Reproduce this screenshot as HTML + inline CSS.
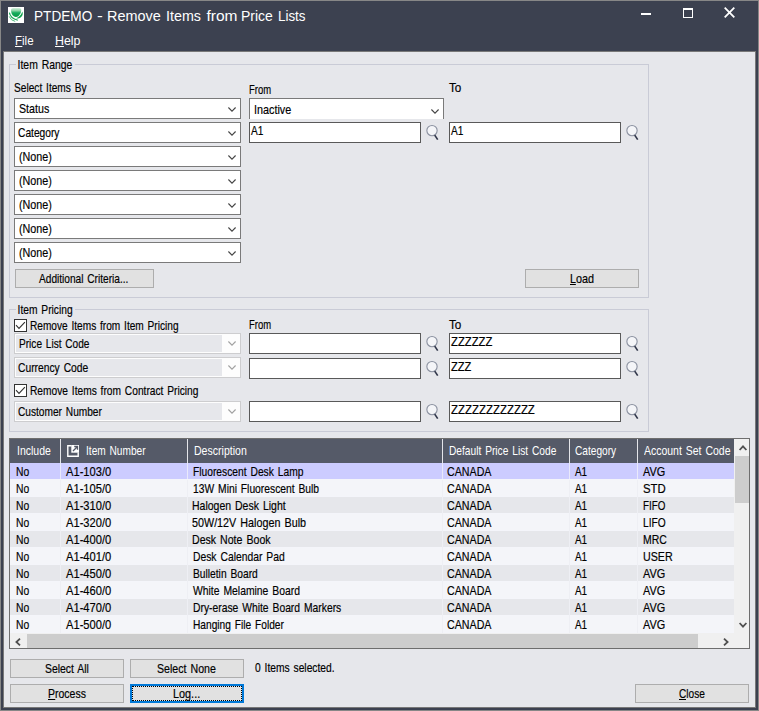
<!DOCTYPE html><html><head><meta charset="utf-8"><title>PTDEMO - Remove Items from Price Lists</title><style>
html,body{margin:0;padding:0}
body{width:759px;height:711px;position:relative;overflow:hidden;background:#3c4150;font-family:"Liberation Sans",sans-serif;font-size:13px;color:#000}
.a{position:absolute;box-sizing:border-box}
.t{position:absolute;white-space:pre;line-height:1;transform-origin:0 0;color:#000;word-spacing:1.3px;-webkit-text-stroke:0.18px}
.t u{text-decoration:none;background:linear-gradient(currentColor,currentColor) no-repeat;background-size:100% 1px}
.client{left:3px;top:51px;width:753px;height:657px;background:#e6e7eb;border:1px solid #787878}
.grp{border:1px solid #c9cbd6}
.cb{background:#fff;border:1px solid #7a7a7a}
.tb{background:#fff;border:1px solid #595959}
.btn{background:#e1e1e1;border:1px solid #adadad}
.dcb{background:#fdfdfd;border:1px solid #cdcdcf}
.dcb i{position:absolute;left:1px;top:1px;bottom:1px;width:206px;background:#e6e7eb}
svg{position:absolute;overflow:visible}
.row{left:10px;width:724px;height:17px;border-bottom:1px solid #f4f5fa}
</style></head><body>
<div class="a" style="left:0;top:0;width:759px;height:711px;border:1px solid #878787"></div>
<div class="a client"></div>
<svg class="a" style="left:8px;top:7px" width="16" height="16" viewBox="0 0 16 16">
<defs><linearGradient id="g1" x1="0" y1="0" x2="0" y2="1"><stop offset="0" stop-color="#d9f3e2"/><stop offset="0.3" stop-color="#8fd4a8"/><stop offset="0.55" stop-color="#16ad5c"/><stop offset="1" stop-color="#089a47"/></linearGradient></defs>
<rect width="16" height="16" fill="#fff"/>
<path d="M3 3 Q3 0.9 5.2 0.9 L11.3 0.9 Q13.3 0.9 13.3 3 Q13.3 6.8 10.6 9 Q8 10.6 5.8 9.3 Q3 7.3 3 3 Z" fill="url(#g1)"/>
<path d="M14.4 4.6 Q15.6 8.4 12.6 10.6 Q10.6 11.9 8.2 11.3 Q12.6 9.8 14.4 4.6 Z" fill="#0ea24d"/>
<path d="M1.4 5.6 Q2.2 11.2 9.8 13.3" fill="none" stroke="#19a855" stroke-width="1.1"/>
<path d="M1.2 9.4 Q2.8 13.6 7.2 14.4" fill="none" stroke="#3cb66f" stroke-width="0.9"/>
</svg>
<div class="a" style="left:641px;top:13px;width:10px;height:2px;background:#fff"></div>
<div class="a" style="left:683px;top:8px;width:10px;height:10px;border:1px solid #fff;border-top-width:2px"></div>
<svg class="a" style="left:724px;top:7px" width="11" height="11" viewBox="0 0 11 11"><path d="M0.7 0.7 L10.3 10.3 M10.3 0.7 L0.7 10.3" stroke="#fff" stroke-width="1.8" fill="none"/></svg>
<div class="a grp" style="left:9px;top:64px;width:640px;height:234px"></div>
<div class="a grp" style="left:9px;top:309px;width:640px;height:123px"></div>
<div class="a cb" style="left:14px;top:98px;width:227px;height:21px"></div>
<svg style="left:228px;top:107px" width="8" height="5" viewBox="0 0 8 5"><path d="M0.4 0.5 L4 4.1 L7.6 0.5" fill="none" stroke="#444" stroke-width="1.1"/></svg>
<div class="a cb" style="left:14px;top:122px;width:227px;height:21px"></div>
<svg style="left:228px;top:131px" width="8" height="5" viewBox="0 0 8 5"><path d="M0.4 0.5 L4 4.1 L7.6 0.5" fill="none" stroke="#444" stroke-width="1.1"/></svg>
<div class="a cb" style="left:14px;top:146px;width:227px;height:21px"></div>
<svg style="left:228px;top:155px" width="8" height="5" viewBox="0 0 8 5"><path d="M0.4 0.5 L4 4.1 L7.6 0.5" fill="none" stroke="#444" stroke-width="1.1"/></svg>
<div class="a cb" style="left:14px;top:170px;width:227px;height:21px"></div>
<svg style="left:228px;top:179px" width="8" height="5" viewBox="0 0 8 5"><path d="M0.4 0.5 L4 4.1 L7.6 0.5" fill="none" stroke="#444" stroke-width="1.1"/></svg>
<div class="a cb" style="left:14px;top:194px;width:227px;height:21px"></div>
<svg style="left:228px;top:203px" width="8" height="5" viewBox="0 0 8 5"><path d="M0.4 0.5 L4 4.1 L7.6 0.5" fill="none" stroke="#444" stroke-width="1.1"/></svg>
<div class="a cb" style="left:14px;top:218px;width:227px;height:21px"></div>
<svg style="left:228px;top:227px" width="8" height="5" viewBox="0 0 8 5"><path d="M0.4 0.5 L4 4.1 L7.6 0.5" fill="none" stroke="#444" stroke-width="1.1"/></svg>
<div class="a cb" style="left:14px;top:242px;width:227px;height:21px"></div>
<svg style="left:228px;top:251px" width="8" height="5" viewBox="0 0 8 5"><path d="M0.4 0.5 L4 4.1 L7.6 0.5" fill="none" stroke="#444" stroke-width="1.1"/></svg>
<div class="a cb" style="left:249px;top:98px;width:195px;height:22px;border-bottom:none;height:21px"></div>
<svg style="left:431px;top:108.5px" width="8" height="5" viewBox="0 0 8 5"><path d="M0.4 0.5 L4 4.1 L7.6 0.5" fill="none" stroke="#444" stroke-width="1.1"/></svg>
<div class="a tb" style="left:249px;top:122px;width:172px;height:21px"></div>
<div class="a tb" style="left:449px;top:122px;width:172px;height:21px"></div>
<svg style="left:426px;top:125px" width="14" height="16" viewBox="0 0 14 16"><circle cx="6" cy="5.6" r="5.15" fill="#f4f5f8" stroke="#8b91a0" stroke-width="1.1"/><path d="M8.7 10.1 L11.7 14.6" stroke="#30364a" stroke-width="1.7" fill="none"/></svg>
<svg style="left:626px;top:125px" width="14" height="16" viewBox="0 0 14 16"><circle cx="6" cy="5.6" r="5.15" fill="#f4f5f8" stroke="#8b91a0" stroke-width="1.1"/><path d="M8.7 10.1 L11.7 14.6" stroke="#30364a" stroke-width="1.7" fill="none"/></svg>
<div class="a tb" style="left:249px;top:333px;width:172px;height:21px"></div>
<div class="a tb" style="left:449px;top:333px;width:172px;height:21px"></div>
<svg style="left:426px;top:336px" width="14" height="16" viewBox="0 0 14 16"><circle cx="6" cy="5.6" r="5.15" fill="#f4f5f8" stroke="#8b91a0" stroke-width="1.1"/><path d="M8.7 10.1 L11.7 14.6" stroke="#30364a" stroke-width="1.7" fill="none"/></svg>
<svg style="left:626px;top:336px" width="14" height="16" viewBox="0 0 14 16"><circle cx="6" cy="5.6" r="5.15" fill="#f4f5f8" stroke="#8b91a0" stroke-width="1.1"/><path d="M8.7 10.1 L11.7 14.6" stroke="#30364a" stroke-width="1.7" fill="none"/></svg>
<div class="a tb" style="left:249px;top:358px;width:172px;height:21px"></div>
<div class="a tb" style="left:449px;top:358px;width:172px;height:21px"></div>
<svg style="left:426px;top:361px" width="14" height="16" viewBox="0 0 14 16"><circle cx="6" cy="5.6" r="5.15" fill="#f4f5f8" stroke="#8b91a0" stroke-width="1.1"/><path d="M8.7 10.1 L11.7 14.6" stroke="#30364a" stroke-width="1.7" fill="none"/></svg>
<svg style="left:626px;top:361px" width="14" height="16" viewBox="0 0 14 16"><circle cx="6" cy="5.6" r="5.15" fill="#f4f5f8" stroke="#8b91a0" stroke-width="1.1"/><path d="M8.7 10.1 L11.7 14.6" stroke="#30364a" stroke-width="1.7" fill="none"/></svg>
<div class="a tb" style="left:249px;top:401px;width:172px;height:21px"></div>
<div class="a tb" style="left:449px;top:401px;width:172px;height:21px"></div>
<svg style="left:426px;top:404px" width="14" height="16" viewBox="0 0 14 16"><circle cx="6" cy="5.6" r="5.15" fill="#f4f5f8" stroke="#8b91a0" stroke-width="1.1"/><path d="M8.7 10.1 L11.7 14.6" stroke="#30364a" stroke-width="1.7" fill="none"/></svg>
<svg style="left:626px;top:404px" width="14" height="16" viewBox="0 0 14 16"><circle cx="6" cy="5.6" r="5.15" fill="#f4f5f8" stroke="#8b91a0" stroke-width="1.1"/><path d="M8.7 10.1 L11.7 14.6" stroke="#30364a" stroke-width="1.7" fill="none"/></svg>
<div class="a btn" style="left:15px;top:269px;width:139px;height:19px;"></div>
<div class="a btn" style="left:525px;top:269px;width:114px;height:19px;"></div>
<div class="a btn" style="left:10px;top:659px;width:114px;height:19px;"></div>
<div class="a btn" style="left:130px;top:659px;width:114px;height:19px;"></div>
<div class="a btn" style="left:10px;top:684px;width:114px;height:19px;"></div>
<div class="a btn" style="left:635px;top:684px;width:114px;height:19px;"></div>
<div class="a" style="left:130px;top:684px;width:114px;height:19px;background:#e1e1e1;border:2px solid #0078d7"></div>
<div class="a" style="left:132px;top:686px;width:110px;height:15px;border:1px dotted #000"></div>
<svg style="left:14px;top:319px" width="13" height="13" viewBox="0 0 13 13"><rect x="0.5" y="0.5" width="12" height="12" fill="#fff" stroke="#333"/><path d="M2 6.2 L5 9.3 L10.9 3.2" fill="none" stroke="#333" stroke-width="1.15"/></svg>
<svg style="left:14px;top:384px" width="13" height="13" viewBox="0 0 13 13"><rect x="0.5" y="0.5" width="12" height="12" fill="#fff" stroke="#333"/><path d="M2 6.2 L5 9.3 L10.9 3.2" fill="none" stroke="#333" stroke-width="1.15"/></svg>
<div class="a dcb" style="left:14px;top:333px;width:227px;height:21px"><i></i></div>
<svg style="left:228px;top:340.8px" width="8" height="5" viewBox="0 0 8 5"><path d="M0.4 0.5 L4 4.1 L7.6 0.5" fill="none" stroke="#a0a0a0" stroke-width="1.1"/></svg>
<div class="a dcb" style="left:14px;top:357px;width:227px;height:21px"><i></i></div>
<svg style="left:228px;top:364.8px" width="8" height="5" viewBox="0 0 8 5"><path d="M0.4 0.5 L4 4.1 L7.6 0.5" fill="none" stroke="#a0a0a0" stroke-width="1.1"/></svg>
<div class="a dcb" style="left:14px;top:401px;width:227px;height:21px"><i></i></div>
<svg style="left:228px;top:408.8px" width="8" height="5" viewBox="0 0 8 5"><path d="M0.4 0.5 L4 4.1 L7.6 0.5" fill="none" stroke="#a0a0a0" stroke-width="1.1"/></svg>
<div class="a" style="left:9px;top:438px;width:741px;height:211px;background:#f0f0f0;border:1px solid #6e6e6e"></div>
<div class="a" style="left:10px;top:439px;width:724px;height:24px;background:#555a68"></div>
<div class="a row" style="top:463px;background:#ccccff"></div>
<div class="a row" style="top:480px;background:#f4f5f9"></div>
<div class="a row" style="top:497px;background:#e6e7eb"></div>
<div class="a row" style="top:514px;background:#f4f5f9"></div>
<div class="a row" style="top:531px;background:#e6e7eb"></div>
<div class="a row" style="top:548px;background:#f4f5f9"></div>
<div class="a row" style="top:565px;background:#e6e7eb"></div>
<div class="a row" style="top:582px;background:#f4f5f9"></div>
<div class="a row" style="top:599px;background:#e6e7eb"></div>
<div class="a row" style="top:616px;background:#f4f5f9"></div>
<div class="a" style="left:60px;top:463px;width:1px;height:16px;background:#e9e9fb"></div>
<div class="a" style="left:60px;top:439px;width:1px;height:24px;background:#e4e5ea"></div>
<div class="a" style="left:60px;top:480px;width:1px;height:153px;background:#eeeff4"></div>
<div class="a" style="left:187px;top:463px;width:1px;height:16px;background:#e9e9fb"></div>
<div class="a" style="left:187px;top:439px;width:1px;height:24px;background:#e4e5ea"></div>
<div class="a" style="left:187px;top:480px;width:1px;height:153px;background:#eeeff4"></div>
<div class="a" style="left:442px;top:463px;width:1px;height:16px;background:#e9e9fb"></div>
<div class="a" style="left:442px;top:439px;width:1px;height:24px;background:#e4e5ea"></div>
<div class="a" style="left:442px;top:480px;width:1px;height:153px;background:#eeeff4"></div>
<div class="a" style="left:569px;top:463px;width:1px;height:16px;background:#e9e9fb"></div>
<div class="a" style="left:569px;top:439px;width:1px;height:24px;background:#e4e5ea"></div>
<div class="a" style="left:569px;top:480px;width:1px;height:153px;background:#eeeff4"></div>
<div class="a" style="left:637px;top:463px;width:1px;height:16px;background:#e9e9fb"></div>
<div class="a" style="left:637px;top:439px;width:1px;height:24px;background:#e4e5ea"></div>
<div class="a" style="left:637px;top:480px;width:1px;height:153px;background:#eeeff4"></div>
<svg style="left:67px;top:445px" width="12" height="12" viewBox="0 0 12 12"><path d="M4.5 0.8 H0.8 V11.2 H11.2 V7.5" fill="none" stroke="#fff" stroke-width="1.4"/><rect x="4.3" y="0" width="7.7" height="7.7" fill="#fff"/><path d="M6 6 L10.3 1.7 M7.2 1.5 H10.5 V4.8" fill="none" stroke="#555a68" stroke-width="1.3"/></svg>
<div class="a" style="left:735px;top:456px;width:14px;height:47px;background:#cdcdcd"></div>
<svg style="left:739px;top:445px" width="8" height="6" viewBox="0 0 8 6"><path d="M0.6 5 L4 1.4 L7.4 5" fill="none" stroke="#505050" stroke-width="1.8"/></svg>
<svg style="left:739px;top:622px" width="8" height="6" viewBox="0 0 8 6"><path d="M0.6 1 L4 4.6 L7.4 1" fill="none" stroke="#505050" stroke-width="1.8"/></svg>
<div class="a" style="left:27px;top:634px;width:671px;height:14px;background:#cdcdcd"></div>
<svg style="left:15px;top:638px" width="6" height="8" viewBox="0 0 6 8"><path d="M5 0.6 L1.4 4 L5 7.4" fill="none" stroke="#505050" stroke-width="1.8"/></svg>
<svg style="left:723px;top:638px" width="6" height="8" viewBox="0 0 6 8"><path d="M1 0.6 L4.6 4 L1 7.4" fill="none" stroke="#505050" stroke-width="1.8"/></svg>
<span class="t" style="left:34.12px;top:8.00px;transform:scaleX(0.8785);font-size:15.5px;word-spacing:0;color:#fff;-webkit-text-stroke:0">PTDEMO</span>
<span class="t" style="left:96.97px;top:8.00px;transform:scaleX(1.1250);font-size:15.5px;word-spacing:0;color:#fff;-webkit-text-stroke:0">-</span>
<span class="t" style="left:106.67px;top:8.00px;transform:scaleX(0.9321);font-size:15.5px;word-spacing:0;color:#fff;-webkit-text-stroke:0">Remove</span>
<span class="t" style="left:165.58px;top:8.00px;transform:scaleX(0.9216);font-size:15.5px;word-spacing:0;color:#fff;-webkit-text-stroke:0">Items</span>
<span class="t" style="left:206.50px;top:8.00px;transform:scaleX(1.0000);font-size:15.5px;word-spacing:0;color:#fff;-webkit-text-stroke:0">from</span>
<span class="t" style="left:241.30px;top:8.00px;transform:scaleX(0.9000);font-size:15.5px;word-spacing:0;color:#fff;-webkit-text-stroke:0">Price</span>
<span class="t" style="left:278.24px;top:8.00px;transform:scaleX(0.8633);font-size:15.5px;word-spacing:0;color:#fff;-webkit-text-stroke:0">Lists</span>
<span class="t" style="left:14.58px;top:35.00px;transform:scaleX(0.9211);font-size:12.5px;word-spacing:0;color:#fff;-webkit-text-stroke:0"><u style="background-position:0 12px">F</u>ile</span>
<span class="t" style="left:55.01px;top:35.00px;transform:scaleX(0.9917);font-size:12.5px;word-spacing:0;color:#fff;-webkit-text-stroke:0"><u style="background-position:0 12px">H</u>elp</span>
<span class="t" style="left:17.70px;top:58.00px;transform:scaleX(0.7985);background:#e6e7eb;padding:0 3px 0 2px;margin-left:-1.60px">Item Range</span>
<span class="t" style="left:13.72px;top:81.00px;transform:scaleX(0.7815)">Select Items By</span>
<span class="t" style="left:249.17px;top:83.00px;transform:scaleX(0.7276)">From</span>
<span class="t" style="left:449.10px;top:81.00px;transform:scaleX(0.9000)">To</span>
<span class="t" style="left:18.88px;top:102.00px;transform:scaleX(0.8200)">Status</span>
<span class="t" style="left:254.07px;top:103.00px;transform:scaleX(0.8302)">Inactive</span>
<span class="t" style="left:18.31px;top:126.00px;transform:scaleX(0.7865)">Category</span>
<span class="t" style="left:18.67px;top:150.00px;transform:scaleX(0.8289)">(None)</span>
<span class="t" style="left:18.67px;top:174.00px;transform:scaleX(0.8289)">(None)</span>
<span class="t" style="left:18.67px;top:198.00px;transform:scaleX(0.8289)">(None)</span>
<span class="t" style="left:18.67px;top:222.00px;transform:scaleX(0.8289)">(None)</span>
<span class="t" style="left:18.67px;top:246.00px;transform:scaleX(0.8289)">(None)</span>
<span class="t" style="left:251.00px;top:124.00px;transform:scaleX(0.7750)">A1</span>
<span class="t" style="left:451.00px;top:124.00px;transform:scaleX(0.7750)">A1</span>
<span class="t" style="left:39.20px;top:272.00px;transform:scaleX(0.7789)">Additional Criteria...</span>
<span class="t" style="left:569.67px;top:272.00px;transform:scaleX(0.8333)"><u style="background-position:0 13px">L</u>oad</span>
<span class="t" style="left:17.71px;top:303.00px;transform:scaleX(0.7868);background:#e6e7eb;padding:0 3px 0 2px;margin-left:-1.57px">Item Pricing</span>
<span class="t" style="left:30.12px;top:319.00px;transform:scaleX(0.7783)">Remove Items from Item Pricing</span>
<span class="t" style="left:249.17px;top:318.00px;transform:scaleX(0.7276)">From</span>
<span class="t" style="left:449.10px;top:318.00px;transform:scaleX(0.9000)">To</span>
<span class="t" style="left:19.12px;top:337.00px;transform:scaleX(0.7764)">Price List Code</span>
<span class="t" style="left:18.31px;top:361.00px;transform:scaleX(0.7920)">Currency Code</span>
<span class="t" style="left:30.12px;top:384.00px;transform:scaleX(0.7845)">Remove Items from Contract Pricing</span>
<span class="t" style="left:18.32px;top:405.00px;transform:scaleX(0.7804)">Customer Number</span>
<span class="t" style="left:451.30px;top:335.00px;transform:scaleX(0.8687)">ZZZZZZ</span>
<span class="t" style="left:451.30px;top:360.00px;transform:scaleX(0.8542)">ZZZ</span>
<span class="t" style="left:451.30px;top:403.00px;transform:scaleX(0.8800)">ZZZZZZZZZZZZ</span>
<span class="t" style="left:17.09px;top:444.00px;transform:scaleX(0.8073);color:#fff;-webkit-text-stroke:0">Include</span>
<span class="t" style="left:86.12px;top:444.00px;transform:scaleX(0.7800);color:#fff;-webkit-text-stroke:0">Item Number</span>
<span class="t" style="left:194.09px;top:444.00px;transform:scaleX(0.8111);color:#fff;-webkit-text-stroke:0">Description</span>
<span class="t" style="left:449.32px;top:444.00px;transform:scaleX(0.7844);color:#fff;-webkit-text-stroke:0">Default Price List Code</span>
<span class="t" style="left:575.32px;top:444.00px;transform:scaleX(0.7788);color:#fff;-webkit-text-stroke:0">Category</span>
<span class="t" style="left:643.80px;top:444.00px;transform:scaleX(0.8056);color:#fff;-webkit-text-stroke:0">Account Set Code</span>
<span class="t" style="left:16.31px;top:465.00px;transform:scaleX(0.7933)">No</span>
<span class="t" style="left:65.80px;top:465.00px;transform:scaleX(0.8577)">A1-103/0</span>
<span class="t" style="left:192.51px;top:465.00px;transform:scaleX(0.7892)">Fluorescent Desk Lamp</span>
<span class="t" style="left:447.28px;top:465.00px;transform:scaleX(0.8208)">CANADA</span>
<span class="t" style="left:575.00px;top:465.00px;transform:scaleX(0.7625)">A1</span>
<span class="t" style="left:642.80px;top:465.00px;transform:scaleX(0.8385)">AVG</span>
<span class="t" style="left:16.31px;top:482.00px;transform:scaleX(0.7933)">No</span>
<span class="t" style="left:65.80px;top:482.00px;transform:scaleX(0.8577)">A1-105/0</span>
<span class="t" style="left:192.51px;top:482.00px;transform:scaleX(0.7918)">13W Mini Fluorescent Bulb</span>
<span class="t" style="left:447.28px;top:482.00px;transform:scaleX(0.8208)">CANADA</span>
<span class="t" style="left:575.00px;top:482.00px;transform:scaleX(0.7625)">A1</span>
<span class="t" style="left:642.52px;top:482.00px;transform:scaleX(0.8750)">STD</span>
<span class="t" style="left:16.31px;top:499.00px;transform:scaleX(0.7933)">No</span>
<span class="t" style="left:65.80px;top:499.00px;transform:scaleX(0.8577)">A1-310/0</span>
<span class="t" style="left:192.49px;top:499.00px;transform:scaleX(0.8070)">Halogen Desk Light</span>
<span class="t" style="left:447.28px;top:499.00px;transform:scaleX(0.8208)">CANADA</span>
<span class="t" style="left:575.00px;top:499.00px;transform:scaleX(0.7625)">A1</span>
<span class="t" style="left:643.14px;top:499.00px;transform:scaleX(0.7571)">FIFO</span>
<span class="t" style="left:16.31px;top:516.00px;transform:scaleX(0.7933)">No</span>
<span class="t" style="left:65.80px;top:516.00px;transform:scaleX(0.8577)">A1-320/0</span>
<span class="t" style="left:192.47px;top:516.00px;transform:scaleX(0.8279)">50W/12V Halogen Bulb</span>
<span class="t" style="left:447.28px;top:516.00px;transform:scaleX(0.8208)">CANADA</span>
<span class="t" style="left:575.00px;top:516.00px;transform:scaleX(0.7625)">A1</span>
<span class="t" style="left:643.11px;top:516.00px;transform:scaleX(0.7852)">LIFO</span>
<span class="t" style="left:16.31px;top:533.00px;transform:scaleX(0.7933)">No</span>
<span class="t" style="left:65.80px;top:533.00px;transform:scaleX(0.8577)">A1-400/0</span>
<span class="t" style="left:192.49px;top:533.00px;transform:scaleX(0.8137)">Desk Note Book</span>
<span class="t" style="left:447.28px;top:533.00px;transform:scaleX(0.8208)">CANADA</span>
<span class="t" style="left:575.00px;top:533.00px;transform:scaleX(0.7625)">A1</span>
<span class="t" style="left:643.10px;top:533.00px;transform:scaleX(0.8036)">MRC</span>
<span class="t" style="left:16.31px;top:550.00px;transform:scaleX(0.7933)">No</span>
<span class="t" style="left:65.80px;top:550.00px;transform:scaleX(0.8577)">A1-401/0</span>
<span class="t" style="left:192.51px;top:550.00px;transform:scaleX(0.7947)">Desk Calendar Pad</span>
<span class="t" style="left:447.28px;top:550.00px;transform:scaleX(0.8208)">CANADA</span>
<span class="t" style="left:575.00px;top:550.00px;transform:scaleX(0.7625)">A1</span>
<span class="t" style="left:643.08px;top:550.00px;transform:scaleX(0.8235)">USER</span>
<span class="t" style="left:16.31px;top:567.00px;transform:scaleX(0.7933)">No</span>
<span class="t" style="left:65.80px;top:567.00px;transform:scaleX(0.8577)">A1-450/0</span>
<span class="t" style="left:192.51px;top:567.00px;transform:scaleX(0.7877)">Bulletin Board</span>
<span class="t" style="left:447.28px;top:567.00px;transform:scaleX(0.8208)">CANADA</span>
<span class="t" style="left:575.00px;top:567.00px;transform:scaleX(0.7625)">A1</span>
<span class="t" style="left:642.80px;top:567.00px;transform:scaleX(0.8385)">AVG</span>
<span class="t" style="left:16.31px;top:584.00px;transform:scaleX(0.7933)">No</span>
<span class="t" style="left:65.80px;top:584.00px;transform:scaleX(0.8577)">A1-460/0</span>
<span class="t" style="left:193.30px;top:584.00px;transform:scaleX(0.7977)">White Melamine Board</span>
<span class="t" style="left:447.28px;top:584.00px;transform:scaleX(0.8208)">CANADA</span>
<span class="t" style="left:575.00px;top:584.00px;transform:scaleX(0.7625)">A1</span>
<span class="t" style="left:642.80px;top:584.00px;transform:scaleX(0.8385)">AVG</span>
<span class="t" style="left:16.31px;top:601.00px;transform:scaleX(0.7933)">No</span>
<span class="t" style="left:65.80px;top:601.00px;transform:scaleX(0.8577)">A1-470/0</span>
<span class="t" style="left:192.51px;top:601.00px;transform:scaleX(0.7941)">Dry-erase White Board Markers</span>
<span class="t" style="left:447.28px;top:601.00px;transform:scaleX(0.8208)">CANADA</span>
<span class="t" style="left:575.00px;top:601.00px;transform:scaleX(0.7625)">A1</span>
<span class="t" style="left:642.80px;top:601.00px;transform:scaleX(0.8385)">AVG</span>
<span class="t" style="left:16.31px;top:618.00px;transform:scaleX(0.7933)">No</span>
<span class="t" style="left:65.80px;top:618.00px;transform:scaleX(0.8577)">A1-500/0</span>
<span class="t" style="left:192.52px;top:618.00px;transform:scaleX(0.7835)">Hanging File Folder</span>
<span class="t" style="left:447.28px;top:618.00px;transform:scaleX(0.8208)">CANADA</span>
<span class="t" style="left:575.00px;top:618.00px;transform:scaleX(0.7625)">A1</span>
<span class="t" style="left:642.80px;top:618.00px;transform:scaleX(0.8385)">AVG</span>
<span class="t" style="left:44.70px;top:662.00px;transform:scaleX(0.8019)">Select All</span>
<span class="t" style="left:156.68px;top:662.00px;transform:scaleX(0.8155)">Select None</span>
<span class="t" style="left:254.50px;top:661.00px;transform:scaleX(0.7890)">0 Items selected.</span>
<span class="t" style="left:47.69px;top:687.00px;transform:scaleX(0.8065)"><u style="background-position:0 13px">P</u>rocess</span>
<span class="t" style="left:172.66px;top:687.00px;transform:scaleX(0.8355)">Log...</span>
<span class="t" style="left:678.72px;top:687.00px;transform:scaleX(0.7781)"><u style="background-position:0 13px">C</u>lose</span>
</body></html>
